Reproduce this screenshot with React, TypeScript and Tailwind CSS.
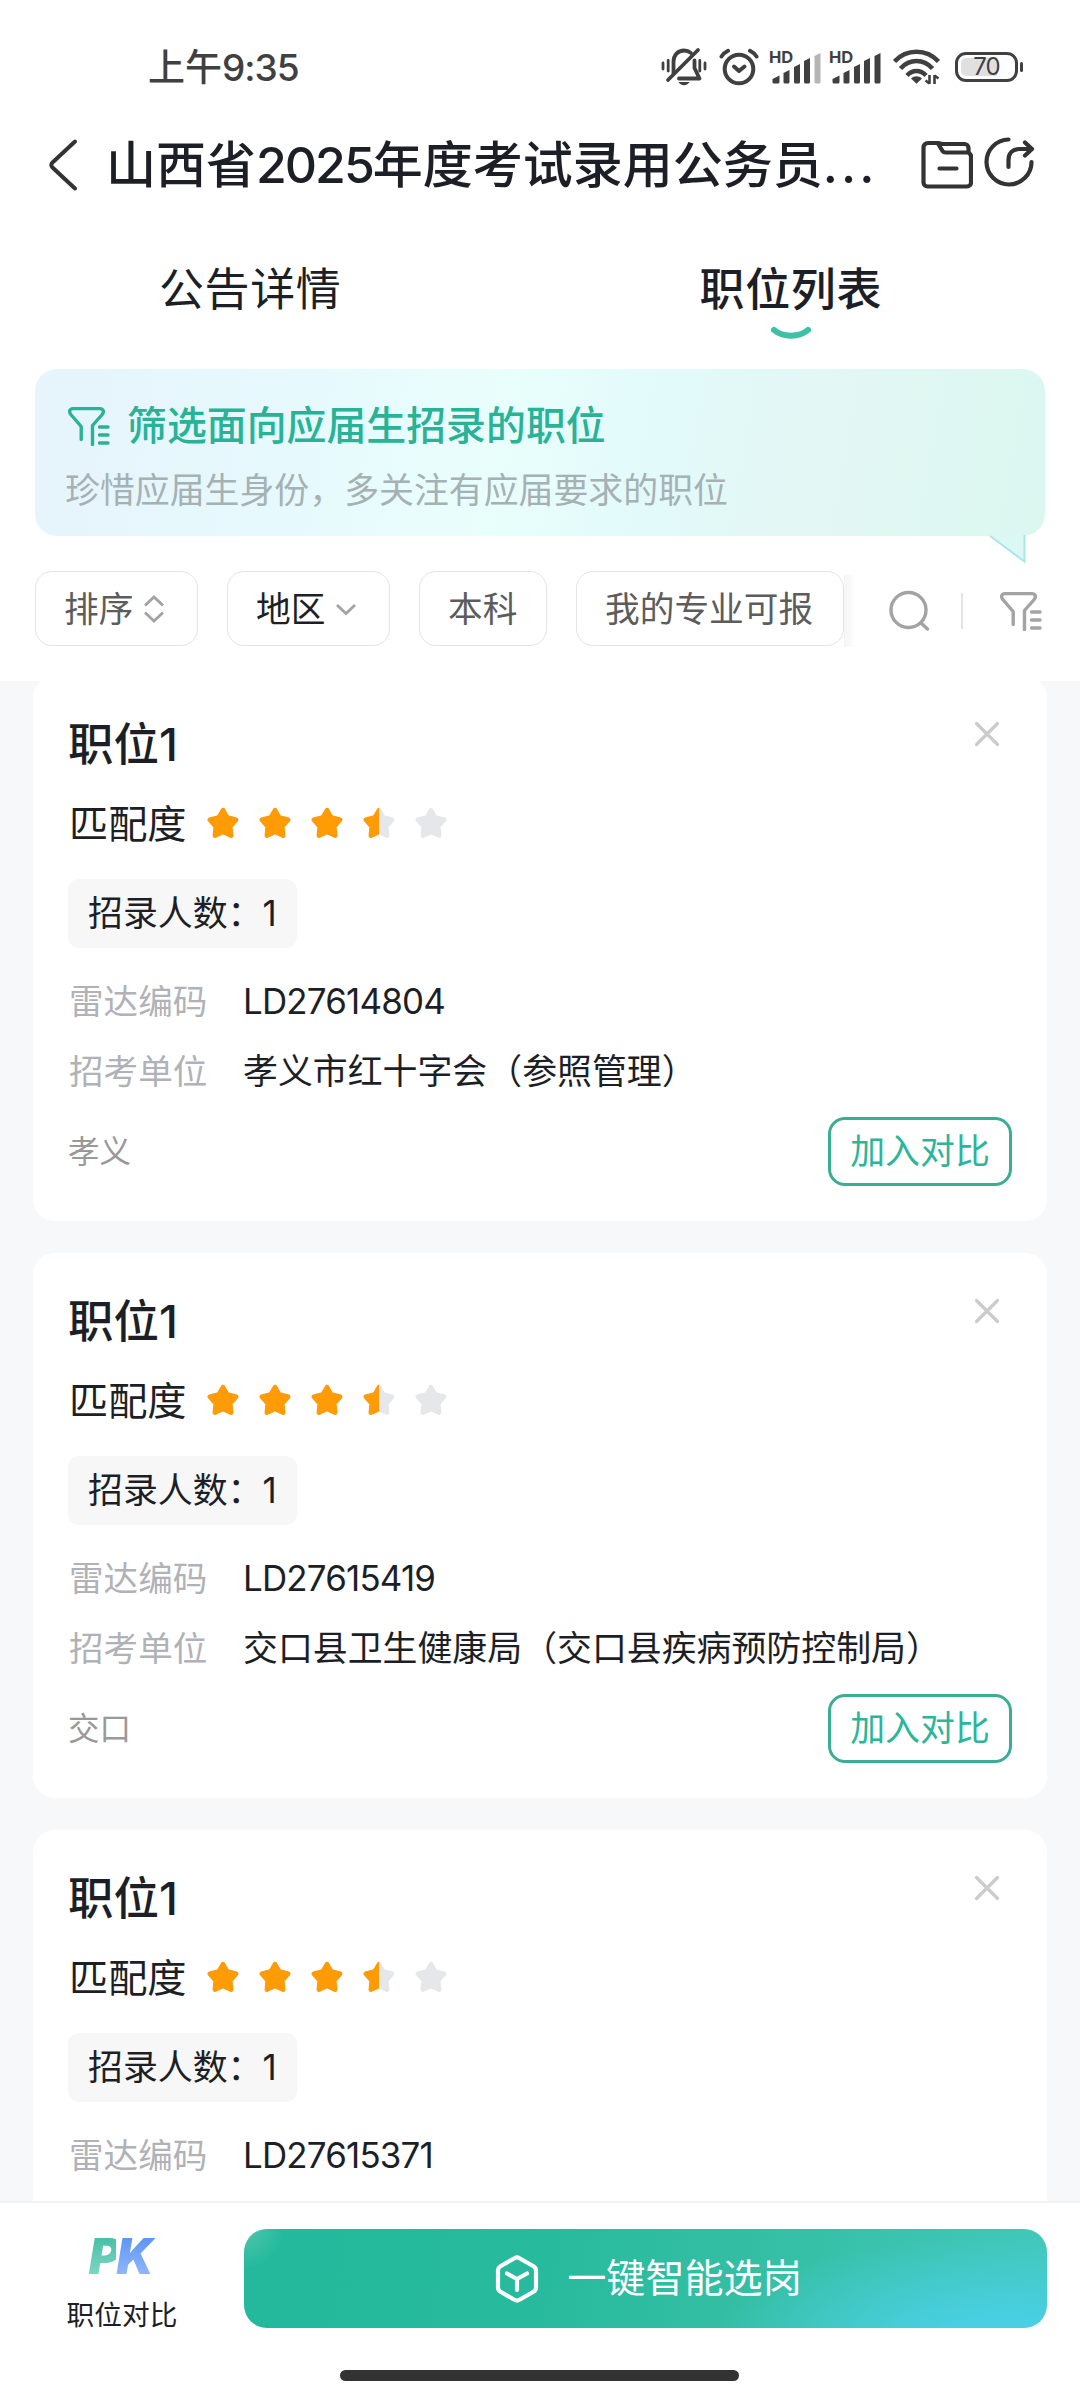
import { clsx } from 'clsx';

interface Position {
  id: string;
  title: string;
  score: number;
  headcount: number;
  code: string;
  unit?: string;
  region?: string;
}

interface FilterChip {
  label: string;
  width: string;
  active?: boolean;
  icon?: 'sort' | 'down';
}

const positions: Position[] = [
  {
    id: 'LD27614804',
    title: '职位1',
    score: 3.5,
    headcount: 1,
    code: 'LD27614804',
    unit: '孝义市红十字会（参照管理）',
    region: '孝义',
  },
  {
    id: 'LD27615419',
    title: '职位1',
    score: 3.5,
    headcount: 1,
    code: 'LD27615419',
    unit: '交口县卫生健康局（交口县疾病预防控制局）',
    region: '交口',
  },
  {
    id: 'LD27615371',
    title: '职位1',
    score: 3.5,
    headcount: 1,
    code: 'LD27615371',
  },
];

const chips: FilterChip[] = [
  { label: '排序', width: 'w-[163px]', icon: 'sort' },
  { label: '地区', width: 'w-[163px]', icon: 'down', active: true },
  { label: '本科', width: 'w-[128px]' },
  { label: '我的专业可报', width: 'w-[268px]' },
];

const SilentIcon = () => (
  <svg width="46" height="40" viewBox="0 0 46 40" fill="none" stroke="#404040" strokeWidth="3.8" strokeLinecap="round">
    <path d="M12.5 26.5V15C12.5 8 17 3.5 23 3.5c2.6 0 5 .8 6.8 2.4" />
    <path d="M33.5 13.5V21l5 10.5H18" strokeLinejoin="round" />
    <path d="M37 3 7 33" />
    <path d="M2 16v6M7.2 13.5v10.5M38.8 13.5v10.5M44 16v6" strokeWidth="2.8" />
    <path d="M17.5 35h11c-1 2-3 3.2-5.5 3.2S18.5 37 17.5 35Z" fill="#404040" stroke="none" />
  </svg>
);

const AlarmIcon = () => (
  <svg width="40" height="38" viewBox="0 0 40 38" fill="none" stroke="#404040" strokeWidth="4" strokeLinecap="round">
    <circle cx="20" cy="21" r="14.3" />
    <path d="m15 18.5 5 4.5 5.5-4.5" strokeLinejoin="round" />
    <path d="M2.5 8.5C4.2 6 6.5 4 9 2.8M37.5 8.5C35.8 6 33.5 4 31 2.8" />
  </svg>
);

const SignalIcon = ({ weak = false }: { weak?: boolean }) => (
  <div className="relative h-[34px] w-[50px]">
    <span className="absolute -left-[2px] -top-[3px] text-[16.5px] font-bold leading-[21px] text-[#404040]">HD</span>
    <svg className="absolute inset-0" width="50" height="34" viewBox="0 0 50 34" fill="#404040">
      <path d="M1.5 29 8.500 25.500v6.500a1.500 1.500 0 0 1-1.500 1.500H3A1.500 1.500 0 0 1 1.500 32Z" />
      <path d="m12.5 23 6-3V32a1.500 1.500 0 0 1-1.500 1.500h-3A1.500 1.500 0 0 1 12.500 32Z" />
      <path d="m23 17 6-3V32a1.500 1.500 0 0 1-1.500 1.500h-3A1.500 1.500 0 0 1 23 32Z" />
      <path d="m33 11 6-3V32a1.500 1.500 0 0 1-1.500 1.500h-3A1.500 1.500 0 0 1 33 32Z" />
      <path
        d="m43.5 6 6-3v29a1.500 1.500 0 0 1-1.500 1.500h-3a1.500 1.500 0 0 1-1.500-1.500Z"
        fill={weak ? '#b5b5b5' : '#404040'}
      />
    </svg>
  </div>
);

const WifiIcon = () => (
  <svg width="47" height="36" viewBox="0 0 47 36" fill="none" stroke="#404040" strokeWidth="4.6">
    <path d="M1.5 12.5C13.5-.5 33.5-.5 45.5 12.5" />
    <path d="M7.5 19.5c9-10 23-10 32 0" />
    <path d="M14 26.5c5.5-6 13.5-6 19 0" />
    <path d="M18 29.5c3.2-3 7.8-3 11 0l-5.5 5.3Z" fill="#404040" stroke="none" />
    <path d="M36.5 26v9M32.5 31.5l4 3M41.5 35v-9M45.5 29.5l-4-3" strokeWidth="2.6" />
  </svg>
);

const BatteryIcon = () => (
  <div className="flex items-center gap-[2px]">
    <div className="flex h-[30px] w-[63px] items-center rounded-[11px] border-[3px] border-[#404040] p-[3px]">
      <div className="flex h-[18px] w-[51px] items-center justify-center rounded-[5px] bg-[linear-gradient(90deg,#e0e0e0_70%,#fff_70%)] text-2xl leading-[18px] tracking-[-0.8px] text-[#404040]">
        70
      </div>
    </div>
    <div className="h-[10px] w-[3px] rounded-full bg-[#404040]" />
  </div>
);

const FunnelIcon = () => (
  <svg width="42" height="40" viewBox="0 0 42 40" fill="none" stroke="currentColor" strokeWidth="3.4" strokeLinecap="round">
    <path
      d="M13.2 33.5V20.5L2.8 8.5C.5 5.5 1.8 2.6 5 2.6h27c3.2 0 4.5 2.9 2.2 5.9L24.5 19.5v19"
      strokeLinejoin="round"
    />
    <path d="M31.5 21h8.5M31.5 29h8.5M31.5 37h8.5" />
  </svg>
);

const StarShape = ({ className }: { className?: string }) => (
  <svg className={className} width="32" height="32" viewBox="0 0 32 32" fill="currentColor">
    <path
      d="M16 3 20.400 10.500 29.200 12.700 23.400 19.500 24.200 28.700 16 25 7.800 28.700 8.600 19.500 2.800 12.700 11.600 10.500Z"
      stroke="currentColor"
      strokeWidth="4.4"
      strokeLinejoin="round"
    />
  </svg>
);

const Star = ({ fill }: { fill: number }) => (
  <div className="relative h-8 w-8">
    <StarShape className="text-[#e5e7eb]" />
    <div className="absolute inset-y-0 left-0 overflow-hidden" style={{ width: `${fill * 100}%` }}>
      <StarShape className="max-w-none text-[#ff9b05]" />
    </div>
  </div>
);

const StatusBar = () => (
  <header className="flex h-[110px] items-center justify-between pl-[148px] pr-[57px] pt-[24px]">
    <span className="pt-px text-[37px] font-medium text-[#404040]">
      上午<span className="tracking-[-1px]">9:35</span>
    </span>
    <div className="flex items-center">
      <SilentIcon />
      <div className="ml-[12px]"><AlarmIcon /></div>
      <div className="ml-[12px]"><SignalIcon weak /></div>
      <div className="ml-[10px]"><SignalIcon /></div>
      <div className="ml-[12px]"><WifiIcon /></div>
      <div className="ml-[15px]"><BatteryIcon /></div>
    </div>
  </header>
);

const TitleBar = () => (
  <div className="flex h-[110px] items-center pl-[48px]">
    <svg width="30" height="52" viewBox="0 0 30 52" fill="none" stroke="#333" strokeWidth="4" strokeLinecap="round" strokeLinejoin="round">
      <path d="M27 2.5 4.500 23.500c-1.600 1.500-1.600 3.500 0 5L27 49.500" />
    </svg>
    <h1 className="ml-[28px] w-[815px] whitespace-nowrap pt-px text-[50px] font-medium text-[#1d1f27]">
      山西省<span className="tracking-[-2px]">2025</span>年度考试录用公务员<span className="tracking-[3px]">...</span>
    </h1>
    <div className="flex items-center gap-[10px]">
      <svg width="52" height="52" viewBox="0 0 52 52" fill="none" stroke="#333" strokeWidth="4.2" strokeLinejoin="round" strokeLinecap="round">
        <path d="M7 4h9.500c2 0 3 .5 4 1h23a4 4 0 0 1 4 4v4l2.500 3.500v27a4 4 0 0 1-4 4H6.500a4 4 0 0 1-4-4V8.500A4.500 4.500 0 0 1 7 4Z" />
        <path d="m17 4.500 4.500 7.500c.8 1 1.500 1.500 3 1.500H47M18.500 29.500h17" />
      </svg>
      <svg className="-mt-[7px]" width="52" height="52" viewBox="0 0 52 52" fill="none" stroke="#333" strokeWidth="4.2" strokeLinejoin="round" strokeLinecap="round">
        <path d="M25.500 3.500A22.500 22.500 0 1 0 48.500 26" />
        <path d="M25.500 31V24c0-7 4-11 11-11H47M42 6.500l7 6.500-7 6.500" />
      </svg>
    </div>
  </div>
);

const Tabs = () => (
  <nav className="flex h-[149px] justify-between pl-[159px] pr-[198px] pt-[34px] text-[45px] text-[#1d1f27]">
    <span className="leading-[72px] tracking-[0.6px]">公告详情</span>
    <div className="flex flex-col items-center">
      <span className="font-medium leading-[72px] tracking-[0.6px]">职位列表</span>
      <svg width="42" height="16" viewBox="0 0 42 16" fill="none" stroke="#3cc0a6" strokeWidth="6" strokeLinecap="round">
        <path d="M4 4C13 11.500 29 11.500 38 4" />
      </svg>
    </div>
  </nav>
);

const Banner = () => (
  <section className="relative mx-[35px] h-[167px] rounded-[22px] bg-[linear-gradient(100deg,#e6f4fc_0%,#e6f9fd_25%,#e9fffc_46%,#e3fafb_60%,#e2f7f3_80%,#dbf7f0_100%)] pl-[31px] pt-[28px]">
    <div className="flex items-center text-[#28b397]">
      <div className="ml-[2px]"><FunnelIcon /></div>
      <h2 className="ml-[17px] pt-px text-[39.9px] font-medium leading-[56px]">筛选面向应届生招录的职位</h2>
    </div>
    <p className="mt-[11px] -ml-px text-[34.9px] leading-[50px] text-[#a6b1b4]">珍惜应届生身份，多关注有应届要求的职位</p>
    <svg className="absolute left-[953px] top-[166px]" width="40" height="30" viewBox="0 0 40 30">
      <path d="M1 0 37 27V0Z" fill="#dcf8f4" />
      <path d="M2 1 36.500 26.500V0" fill="none" stroke="#a9e6ea" strokeWidth="2" />
    </svg>
  </section>
);

const Filters = () => (
  <div className="flex h-[145px] items-start pl-[35px] pt-[35px]">
    <div className="flex gap-[29px]">
      {chips.map((chip) => (
        <button
          key={chip.label}
          className={clsx(
            'flex h-[75px] items-center whitespace-nowrap rounded-[17px] border border-[#e4e4e4] pl-[28px] text-[34.7px]',
            chip.width,
            chip.active ? 'text-[#1d1f27]' : 'text-[#5c5c5c]',
          )}
          type="button"
        >
          <span className="pt-px">{chip.label}</span>
          {chip.icon === 'sort' && (
            <svg className="ml-[10px]" width="22" height="30" viewBox="0 0 22 30" fill="none" stroke="#a3a3a3" strokeWidth="2.8">
              <path d="m2 11.500 9-8.500 9 8.500M2 18.500l9 8.500 9-8.500" />
            </svg>
          )}
          {chip.icon === 'down' && (
            <svg className="ml-[10px]" width="22" height="14" viewBox="0 0 22 14" fill="none" stroke="#a3a3a3" strokeWidth="2.8">
              <path d="m2 3 9 8.500L20 3" />
            </svg>
          )}
        </button>
      ))}
    </div>
    <div className="mt-1 h-[72px] w-[9px] bg-linear-to-r from-[#f5f5f5] to-[#fcfcfc]" />
    <div className="flex h-[75px] items-center pl-[35px] pt-[4px] text-[#a3a3a3]">
      <svg width="42" height="42" viewBox="0 0 42 42" fill="none" stroke="currentColor" strokeWidth="3.4" strokeLinecap="round">
        <circle cx="20.5" cy="20" r="17.5" />
        <path d="m33.5 33.5 6 5.500" />
      </svg>
      <div className="ml-[31px] h-[36px] w-[2px] bg-[#e4e4e4]" />
      <div className="ml-[37px]"><FunnelIcon /></div>
    </div>
  </div>
);

const PositionCard = ({ position }: { position: Position }) => (
  <article className="h-[545px] shrink-0 rounded-[22px] bg-white pl-[35px] pr-[35px] pt-[39px]">
    <div className="flex items-start justify-between">
      <h3 className="pt-px text-[45.5px] font-medium leading-[58px] text-[#1d1f27]">{position.title}</h3>
      <svg className="mr-[12px] mt-[6px]" width="26" height="26" viewBox="0 0 26 26" stroke="#cbcbcb" strokeWidth="3.2" strokeLinecap="round">
        <path d="m2.5 2.5 21 21M23.5 2.5l-21 21" />
      </svg>
    </div>
    <div className="mt-[20px] flex h-[58px] items-center">
      <span className="w-[119px] whitespace-nowrap pl-px pt-[2px] text-[39.2px] text-[#1d1f27]">匹配度</span>
      <div className="ml-[20px] flex gap-5">
        {[0, 1, 2, 3, 4].map((index) => (
          <Star key={index} fill={Math.min(1, Math.max(0, position.score - index))} />
        ))}
      </div>
    </div>
    <div className="mt-[27px] flex h-[69px] w-[229px] items-center whitespace-nowrap rounded-[11px] bg-[#f7f7f7] pb-px pl-[20px] text-[34.9px] text-[#1d1f27]">
      招录人数：{position.headcount}
    </div>
    <dl className="mt-[18px] grid grid-cols-[174px_1fr] pl-px text-[34.9px] leading-[70px] text-[#1d1f27]">
      <dt className="text-[34.6px] text-[#b0b2b8]">雷达编码</dt>
      <dd className="tracking-[-0.8px]">{position.code}</dd>
      {position.unit && (
        <>
          <dt className="text-[34.6px] text-[#b0b2b8]">招考单位</dt>
          <dd className="whitespace-nowrap">{position.unit}</dd>
        </>
      )}
    </dl>
    {position.region && (
      <div className="mt-[11px] flex items-center justify-between">
        <span className="pt-px text-[31.5px] text-[#999]">{position.region}</span>
        <button
          className="flex h-[69px] w-[184px] items-center justify-center rounded-[17px] border-[3px] border-[#3aae95] text-[34.9px] text-[#2cb59a]"
          type="button"
        >
          加入对比
        </button>
      </div>
    )}
  </article>
);

const BottomBar = () => (
  <footer className="h-[199px] border-t-2 border-[#f1f2f3] bg-white">
    <div className="flex h-[134px] items-start">
      <div className="flex w-[244px] flex-col items-center pt-[29px]">
        <div className="flex h-[50px] items-center text-[49px] font-black italic leading-[50px] tracking-[-4.5px]">
          <span className="bg-linear-to-b from-[#3dbca4] to-[#86dac8] bg-clip-text text-transparent">P</span>
          <span className="bg-linear-to-b from-[#5590f5] to-[#9dbcf8] bg-clip-text pr-[6px] text-transparent">K</span>
        </div>
        <span className="mt-[11px] text-[27.7px] leading-[44px] text-[#1d1f27]">职位对比</span>
      </div>
      <button
        className="mt-[26px] flex h-[99px] w-[803px] items-center justify-center rounded-[23px] bg-[radial-gradient(circle_40px_at_0%_0%,#50c6ac_0%,transparent_100%),radial-gradient(ellipse_290px_105px_at_95%_112%,#4acee8_0%,#48cfe0_25%,transparent_100%),linear-gradient(100deg,#24b99c_0%,#27ba9c_35%,#35bfa5_65%,#43c8bb_100%)] pl-[6px] text-[39.1px] text-white"
        type="button"
      >
        <svg width="44" height="50" viewBox="0 0 44 50" fill="none" stroke="#fff" strokeWidth="4.2" strokeLinecap="round" strokeLinejoin="round">
          <path d="M19.500 4.200a5 5 0 0 1 5 0l14 8a5 5 0 0 1 2.500 4.300v17a5 5 0 0 1-2.500 4.300l-14 8a5 5 0 0 1-5 0l-14-8A5 5 0 0 1 3 33.500v-17a5 5 0 0 1 2.500-4.300Z" />
          <path d="m12 19.500 10 5.500 10-5.500M22 25v11" />
        </svg>
        <span className="ml-[28px]">一键智能选岗</span>
      </button>
    </div>
    <div className="ml-[340px] mt-[33px] h-[11px] w-[399px] rounded-full bg-[#333]" />
  </footer>
);

export default function App() {
  return (
    <div className="flex h-[2400px] w-[1080px] flex-col overflow-hidden bg-white font-[Inter,'Noto_Sans_CJK_SC',sans-serif]">
      <StatusBar />
      <TitleBar />
      <Tabs />
      <Banner />
      <Filters />
      <main className="flex min-h-0 flex-1 flex-col overflow-hidden bg-[#f6f8fa] px-[33px]">
        <div className="-mt-[5px] flex flex-col gap-8">
          {positions.map((position) => (
            <PositionCard key={position.id} position={position} />
          ))}
        </div>
      </main>
      <BottomBar />
    </div>
  );
}
